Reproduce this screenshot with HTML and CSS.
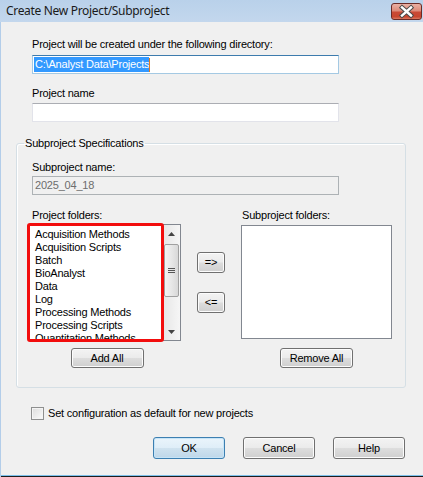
FILE: index.html
```html
<!DOCTYPE html>
<html>
<head>
<meta charset="utf-8">
<link rel="stylesheet" href="styles.css">
</head>
<body>
<div class="window">
  <div class="titlebar">
    <span class="title">Create New Project/Subproject</span>
    <span class="close">
      <svg width="29" height="15" viewBox="0 0 29 15">
        <path d="M10 3.5 L19 11.5 M19 3.5 L10 11.5" stroke="#4a4a4a" stroke-width="4.4" stroke-linecap="square"/>
        <path d="M10 3.5 L19 11.5 M19 3.5 L10 11.5" stroke="#ffffff" stroke-width="2.4" stroke-linecap="square"/>
      </svg>
    </span>
  </div>
  <div class="body">
    <div class="label indent first">Project will be created under the following directory:</div>
    <div class="textbox focused indent"><span class="selected">C:\Analyst Data\Projects</span><span class="caret"></span></div>
    <div class="label indent second">Project name</div>
    <div class="textbox indent name"></div>

    <fieldset class="group">
      <legend>Subproject Specifications</legend>
      <div class="group-inner">
        <div class="label subname">Subproject name:</div>
        <div class="textbox disabled">2025_04_18</div>

        <div class="folders">
          <div class="col left-col">
            <div class="label col-label">Project folders:</div>
            <div class="listwrap">
              <div class="listbox">
                <ul class="items">
                  <li>Acquisition Methods</li>
                  <li>Acquisition Scripts</li>
                  <li>Batch</li>
                  <li>BioAnalyst</li>
                  <li>Data</li>
                  <li>Log</li>
                  <li>Processing Methods</li>
                  <li>Processing Scripts</li>
                  <li>Quantitation Methods</li>
                </ul>
                <div class="scrollbar">
                  <div class="arrow">
                    <svg width="7" height="4" viewBox="0 0 7 4"><path d="M0 4 L3.5 0 L7 4 Z" fill="#444"/></svg>
                  </div>
                  <div class="track">
                    <div class="thumb"><span class="grip"></span></div>
                  </div>
                  <div class="arrow">
                    <svg width="7" height="4" viewBox="0 0 7 4"><path d="M0 0 L3.5 4 L7 0 Z" fill="#444"/></svg>
                  </div>
                </div>
              </div>
              <div class="highlight"></div>
            </div>
            <button class="btn add">Add All</button>
          </div>

          <div class="mid-col">
            <button class="btn move">=&gt;</button>
            <button class="btn move back">&lt;=</button>
          </div>

          <div class="col right-col">
            <div class="label col-label right-label">Subproject folders:</div>
            <div class="listbox empty"></div>
            <button class="btn remove">Remove All</button>
          </div>
        </div>
      </div>
    </fieldset>

    <div class="check-row">
      <span class="checkbox"></span>
      <span class="check-label">Set configuration as default for new projects</span>
    </div>

    <div class="actions">
      <button class="btn dlg default">OK</button>
      <button class="btn dlg">Cancel</button>
      <button class="btn dlg">Help</button>
    </div>
  </div>
</div>
</body>
</html>
```

FILE: styles.css
```css
* { box-sizing: border-box; }

html, body {
  margin: 0;
  padding: 0;
  background: #f0f0f0;
}

.window {
  width: 423px;
  height: 477px;
  background: #f0f0f0;
  overflow: hidden;
  font-family: "Liberation Sans", Arial, sans-serif;
  font-size: 11px;
  letter-spacing: -0.2px;
  color: #000;
  box-shadow: inset 1px 0 0 #b3cde9, inset 0 -1px 0 #1d1d1d, inset 0 -2px 0 #7cc0ea;
}

.titlebar {
  height: 22px;
  display: flex;
  align-items: flex-start;
  padding-left: 6px;
  background: linear-gradient(#b9d1ea, #c3d7ed);
}

.title {
  font-family: "Noto Sans", "Open Sans", sans-serif;
  font-size: 12px;
  letter-spacing: -0.32px;
  line-height: 22px;
  color: #1a1a1a;
}

.close {
  margin-left: auto;
  margin-top: 3px;
  margin-right: 1px;
  width: 31px;
  height: 17px;
  border: 1px solid #6a2b27;
  border-radius: 3px;
  background: linear-gradient(#eab0a4 0%, #dd8b7a 45%, #c94a36 55%, #c8462f 85%, #db7a62 100%);
  display: flex;
}

.body {
  padding-left: 16px;
}

.indent { margin-left: 16px; }

.label {
  line-height: 13px;
  height: 13px;
  white-space: nowrap;
}

.first { margin-top: 16px; }
.second { margin-top: 13px; }

.textbox {
  width: 307px;
  height: 19px;
  margin-top: 4px;
  background: #fff;
  border: 1px solid #e2e3ea;
  border-top-color: #abadb3;
  padding: 2px 1px;
  line-height: 13px;
  display: flex;
  align-items: center;
}

.textbox.name { margin-top: 3px; }

.textbox.focused {
  border-color: #a4c9e3;
  border-top-color: #3d7bad;
}

.selected {
  background: #3399ff;
  color: #fff;
  padding: 1px 0 1px 1px;
  line-height: 13px;
}

.caret {
  width: 1px;
  height: 14px;
  background: #e27a1f;
}

.textbox.disabled {
  background: #f0f0f0;
  border: 1px solid #adb2b5;
  color: #6d6d6d;
  margin-top: 2px;
  padding-left: 2px;
}

.group {
  margin: 15px 0 0 0;
  padding: 0;
  width: 390px;
  border: 1px solid #d5dfe5;
  border-radius: 3px;
  box-shadow: inset 1px 1px 0 #fff;
  min-width: 0;
}

.group legend {
  padding: 0 1px;
  margin-left: 7px;
  line-height: 13px;
}

.group-inner {
  padding: 11px 0 19px 15px;
}

.folders {
  display: flex;
  margin-top: 14px;
  margin-left: -4px;
}

.col {
  display: flex;
  flex-direction: column;
  align-items: center;
}

.left-col { width: 153px; }
.right-col { width: 151px; margin-left: 16px; }

.col-label {
  align-self: flex-start;
  padding-left: 4px;
}

.right-label { padding-left: 1px; }

.listwrap {
  position: relative;
  margin-top: 2px;
}

.listbox {
  width: 153px;
  height: 117px;
  background: #fff;
  border: 1px solid #828790;
  display: flex;
  overflow: hidden;
}

.listbox.empty {
  width: 151px;
  height: 114px;
  margin-top: 3px;
}

.items {
  list-style: none;
  margin: 0;
  padding: 3px 0 0 6px;
  flex: 1;
  line-height: 13px;
  white-space: nowrap;
  overflow: hidden;
}

.scrollbar {
  width: 17px;
  display: flex;
  flex-direction: column;
  background: linear-gradient(to right, #e6e6e6, #f6f6f6);
}

.arrow {
  height: 17px;
  display: flex;
  align-items: center;
  justify-content: center;
}

.track {
  flex: 1;
  padding: 2px 0 0 0;
}

.thumb {
  height: 53px;
  margin: 0 1px;
  border: 1px solid #a0a0a0;
  border-radius: 2px;
  background: linear-gradient(to right, #f4f4f4, #e4e4e4 60%, #d8d8d8);
  display: flex;
  align-items: center;
  justify-content: center;
}

.grip {
  width: 7px;
  height: 5px;
  border-top: 1px solid #555;
  border-bottom: 1px solid #555;
  position: relative;
}

.grip::after {
  content: "";
  position: absolute;
  left: 0;
  right: 0;
  top: 1px;
  height: 1px;
  background: #555;
}

.highlight {
  position: absolute;
  left: -1px;
  top: -1px;
  width: 137px;
  height: 119px;
  border: 3px solid #f20d0d;
  border-radius: 3px;
  pointer-events: none;
}

.btn {
  font-family: "Liberation Sans", Arial, sans-serif;
  font-size: 11px;
  letter-spacing: -0.2px;
  color: #000;
  border: 1px solid #707070;
  border-radius: 3px;
  background: linear-gradient(#f3f3f3 0%, #ebebeb 48%, #dddddd 52%, #cfcfcf 100%);
  box-shadow: inset 0 0 0 1px #fcfcfc;
  padding: 0;
  margin: 0;
  line-height: 13px;
}

.add {
  width: 73px;
  height: 20px;
  margin-top: 7px;
  margin-left: 5px;
}

.remove {
  width: 73px;
  height: 20px;
  margin-top: 9px;
}

.mid-col {
  display: flex;
  flex-direction: column;
  margin-left: 16px;
  padding-top: 43px;
  gap: 19px;
}

.move {
  width: 28px;
  height: 21px;
}

.check-row {
  display: flex;
  align-items: center;
  margin-top: 19px;
  margin-left: 15px;
  height: 13px;
  line-height: 13px;
}

.checkbox {
  width: 13px;
  height: 13px;
  border: 1px solid #8e8f8f;
  background: linear-gradient(135deg, #dcdcdc, #fbfbfb);
  box-shadow: inset 0 0 0 1px #f4f4f4;
  margin-right: 4px;
}

.actions {
  display: flex;
  justify-content: flex-end;
  gap: 18px;
  padding-right: 18px;
  margin-top: 17px;
}

.dlg {
  width: 72px;
  height: 22px;
}

.dlg.default {
  border-color: #3c7fb1;
  background: linear-gradient(#eaf4fb 0%, #dfeef8 48%, #cfe2ef 52%, #bfd7e9 100%);
  box-shadow: inset 0 0 0 1px #c6e4f7;
}
```
